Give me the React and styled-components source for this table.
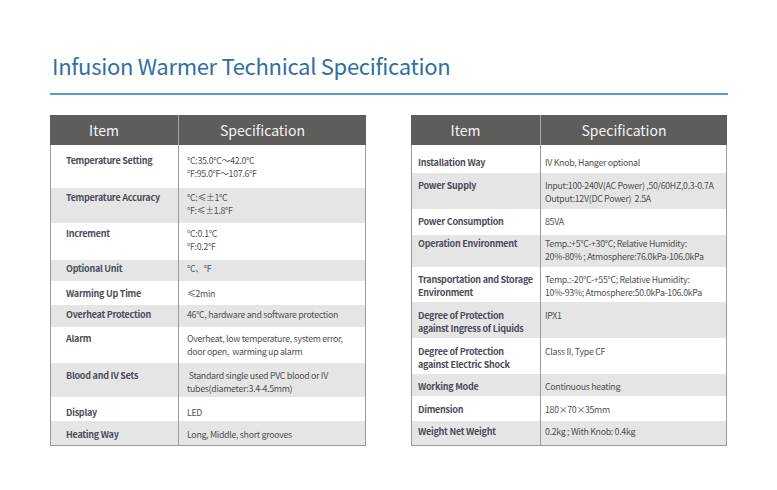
import React from "react";
import styled, { createGlobalStyle } from "styled-components";

const Global = createGlobalStyle`
  html, body { margin: 0; padding: 0; background: #ffffff; }
  body { font-family: "Noto Sans CJK SC", "Noto Sans", sans-serif; }
`;

const Page = styled.div`
  width: 777px;
  height: 490px;
  box-sizing: border-box;
  padding: 50px 0 0 50px;
  background: #fff;
`;

const Title = styled.h1`
  margin: 0 0 0 2px;
  font-family: "Noto Sans CJK SC", "Noto Sans", sans-serif;
  font-weight: 400;
  font-size: 22px;
  letter-spacing: -0.3px;
  line-height: 30px;
  color: #2f6fa3;
`;

const Rule = styled.div`
  width: 678px;
  height: 2px;
  margin-top: 13px;
  background: #5b9bcb;
`;

const Tables = styled.div`
  display: flex;
  gap: 45px;
  margin-top: 20px;
`;

const Table = styled.div`
  width: 316px;
  display: grid;
  grid-template-columns: ${(p) => p.$col}px 1fr;
  box-sizing: border-box;
  border-bottom: 1px solid #9a9a9a;
`;

const HeadCell = styled.div`
  height: 30px;
  background: #5f5c5c;
  color: #f4f4f4;
  font-size: 14px;
  line-height: 30px;
  text-align: center;
  padding-right: 20px;
  box-sizing: border-box;
  border-left: ${(p) => (p.$divider ? "1px solid #a8a8a8" : "none")};
`;

const Cell = styled.div`
  height: ${(p) => p.$h}px;
  box-sizing: border-box;
  padding-top: ${(p) => p.$pt + 1}px;
  padding-left: ${(p) => p.$pl}px;
  background: ${(p) => (p.$alt ? "#e5e5e5" : "#ffffff")};
  border-left: 1px solid #9a9a9a;
  border-right: ${(p) => (p.$last ? "1px solid #9a9a9a" : "none")};
  line-height: 13px;
  white-space: pre;
  overflow: visible;
`;

const Label = styled(Cell)`
  font-size: 9px;
  letter-spacing: -0.25px;
  font-weight: 700;
  color: #4c4c58;
`;

const Value = styled(Cell)`
  font-size: 8.8px;
  letter-spacing: -0.3px;
  font-weight: 400;
  color: #505050;
`;

const leftRows = [
  { h: 43, pt: 8, k: "Temperature Setting", v: "°C:35.0°C～42.0°C\n°F:95.0°F～107.6°F" },
  { h: 35, pt: 2, k: "Temperature Accuracy", v: "°C:≤±1°C\n°F:≤±1.8°F" },
  { h: 37, pt: 3, k: "Increment", v: "°C:0.1°C\n°F:0.2°F" },
  { h: 21, pt: 1, k: "Optional Unit", v: "°C、°F" },
  { h: 24, pt: 5, k: "Warming Up Time", v: "≤2min" },
  { h: 22, pt: 2, k: "Overheat Protection", v: "46°C, hardware and software protection" },
  { h: 36, pt: 4, k: "Alarm", v: "Overheat, low temperature, system error,\ndoor open,  warming up alarm" },
  { h: 34, pt: 5, k: "Blood and IV Sets", v: " Standard single used PVC blood or IV\ntubes(diameter:3.4-4.5mm)" },
  { h: 24, pt: 8, k: "Display", v: "LED" },
  { h: 24, pt: 6, k: "Heating Way", v: "Long, Middle, short grooves" },
];

const rightRows = [
  { h: 28, pt: 10, k: "Installation Way", v: "IV Knob, Hanger optional" },
  { h: 36, pt: 5, k: "Power Supply", v: "Input:100-240V(AC Power) ,50/60HZ,0.3-0.7A\nOutput:12V(DC Power)  2.5A" },
  { h: 26, pt: 5, k: "Power Consumption", v: "85VA" },
  { h: 32, pt: 1, k: "Operation Environment", v: "Temp.:+5°C-+30°C; Relative Humidity:\n20%-80% ; Atmosphere:76.0kPa-106.0kPa" },
  { h: 35, pt: 5, k: "Transportation and Storage\nEnvironment", v: "Temp.:-20°C-+55°C; Relative Humidity:\n10%-93%; Atmosphere:50.0kPa-106.0kPa" },
  { h: 36, pt: 6, k: "Degree of Protection\nagainst Ingress of Liquids", v: "IPX1" },
  { h: 36, pt: 6, k: "Degree of Protection\nagainst Electric Shock", v: "Class II, Type CF" },
  { h: 22, pt: 5, k: "Working Mode", v: "Continuous heating" },
  { h: 25, pt: 6, k: "Dimension", v: "180×70×35mm" },
  { h: 24, pt: 3, k: "Weight Net Weight", v: "0.2kg ; With Knob: 0.4kg" },
];

function SpecTable({ rows, col, labelPad, valuePad }) {
  return (
    <Table $col={col}>
      <HeadCell>Item</HeadCell>
      <HeadCell $divider>Specification</HeadCell>
      {rows.map((r, i) => {
        const alt = i % 2 === 1;
        return (
          <React.Fragment key={i}>
            <Label $h={r.h} $pt={r.pt} $pl={labelPad} $alt={alt}>
              {r.k}
            </Label>
            <Value $h={r.h} $pt={r.pt} $pl={valuePad} $alt={alt} $last>
              {r.v}
            </Value>
          </React.Fragment>
        );
      })}
    </Table>
  );
}

export default function App() {
  return (
    <Page>
      <Global />
      <Title>Infusion Warmer Technical Specification</Title>
      <Rule />
      <Tables>
        <SpecTable rows={leftRows} col={128} labelPad={15} valuePad={8} />
        <SpecTable rows={rightRows} col={129} labelPad={6} valuePad={4} />
      </Tables>
    </Page>
  );
}
